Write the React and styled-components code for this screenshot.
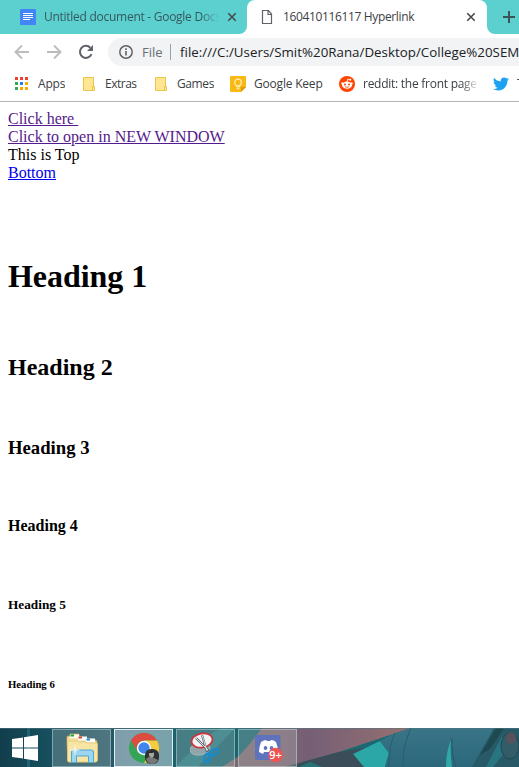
import React from "react";
import styled, { createGlobalStyle } from "styled-components";

const Global = createGlobalStyle`
  body { margin: 0; background: #fff; overflow: hidden; }
  * { box-sizing: border-box; }
`;

const Screen = styled.div`
  display: flex;
  flex-direction: column;
  width: 519px;
  height: 767px;
  overflow: hidden;
`;

const Text = styled.span`
  font-family: "Open Sans", "Noto Sans", sans-serif;
  font-size: ${(p) => p.$size || 12}px;
  letter-spacing: ${(p) => p.$track || 0}px;
  color: ${(p) => p.$color || "#3c4043"};
  line-height: 18px;
  white-space: pre;
  overflow: hidden;
  flex: none;
  width: ${(p) => (p.$width ? p.$width + "px" : "auto")};
  margin-left: ${(p) => p.$indent || 0}px;
  mask-image: ${(p) => (p.$fade ? `linear-gradient(to right, #000 calc(100% - ${p.$fade}px), transparent)` : "none")};
`;

const Icon = styled.svg`
  display: block;
  flex: none;
  width: ${(p) => p.$w || 16}px;
  height: ${(p) => p.$h || p.$w || 16}px;
`;

const TabStrip = styled.div`
  display: flex;
  height: 34px;
  flex: none;
  background: #fff;
`;

const InactiveTab = styled.div`
  display: flex;
  align-items: center;
  width: 247px;
  padding-left: 20px;
  background: #5ccfcf;
  border-bottom-right-radius: 8px;
`;

const ActiveTab = styled.div`
  display: flex;
  align-items: center;
  width: 240px;
  background: linear-gradient(#5ccfcf, #5ccfcf) 0 0 / 100% 8px no-repeat;
`;

const ActiveFace = styled.div`
  display: flex;
  align-items: center;
  width: 240px;
  height: 34px;
  padding-left: 12px;
  background: #fff;
  border-radius: 8px 8px 0 0;
`;

const NewTab = styled.div`
  display: flex;
  align-items: center;
  flex: 1;
  padding: 2px 0 0 15px;
  overflow: hidden;
  background: #5ccfcf;
  border-bottom-left-radius: 8px;
`;

const Toolbar = styled.div`
  display: flex;
  align-items: center;
  height: 36px;
  flex: none;
  padding-left: 14px;
  gap: 16px;
`;

const AddressBar = styled.div`
  display: flex;
  align-items: center;
  flex: 1;
  height: 28px;
  margin-left: -2px;
  padding-left: 10px;
  overflow: hidden;
  background: #f1f3f4;
  border-radius: 14px 0 0 14px;
`;

const Divider = styled.div`
  width: 1px;
  height: 16px;
  flex: none;
  margin: 0 9px 0 7px;
  background: #9aa0a6;
`;

const Bookmarks = styled.div`
  display: flex;
  align-items: center;
  height: 32px;
  flex: none;
  padding: 0 0 4px 14px;
  overflow: hidden;
  border-bottom: 1px solid #b6b4b6;
`;

const Bookmark = styled.div`
  display: flex;
  align-items: center;
  flex: none;
  gap: 8px;
  width: ${(p) => p.$width}px;
`;

const Page = styled.main`
  flex: 1;
  padding: 8px 8px 0;
  overflow: hidden;
  color: #000;
  font-family: "Liberation Serif", "Times New Roman", serif;
  font-size: 16px;
  line-height: normal;

  h1 { font-size: 32px; margin: 22.44px 0 20.44px; letter-spacing: -0.05px; }
  h2 { font-size: 24px; margin: 19.92px 0; }
  h3 { font-size: 18.72px; margin: 18.72px 0; }
  h4 { font-size: 16px; margin: 21.28px 0; }
  h5 { font-size: 13.28px; margin: 22.18px 0; }
  h6 { font-size: 10.72px; margin: 24.98px 0; }
`;

const Link = styled.a`
  color: ${(p) => (p.$visited ? "#551a8b" : "#0000ee")};
  text-decoration: underline;
  white-space: pre;
`;

const Taskbar = styled.footer`
  position: relative;
  display: flex;
  height: 39px;
  flex: none;
  overflow: hidden;
  background: #164a5a;
`;

const Wallpaper = styled.svg`
  position: absolute;
  inset: 0;
  width: 519px;
  height: 39px;
`;

const StartButton = styled.div`
  position: relative;
  display: flex;
  align-items: center;
  width: 52px;
  padding-left: 12px;
`;

const TaskButton = styled.div`
  position: relative;
  display: flex;
  align-items: center;
  justify-content: center;
  width: 59px;
  height: 38px;
  margin: 1px 3px 0 0;
  border: 1px solid ${(p) => (p.$active ? "rgba(255,255,255,.8)" : "rgba(215,235,235,.42)")};
  background: ${(p) => (p.$active ? "rgba(205,222,230,.52)" : "rgba(175,190,190,.3)")};
`;

function Close() {
  return (
    <Icon viewBox="0 0 16 16">
      <path d="M4.3 4.3l7.4 7.4M11.7 4.3l-7.4 7.4" stroke="#45494c" strokeWidth="1.6" />
    </Icon>
  );
}

function Folder() {
  return (
    <Icon viewBox="-1 0 16 16">
      <path d="M1.5 1.5h10v9h1v4h-11z" fill="#ffe693" stroke="#e9c64a" />
      <path d="M10.5 14v-3.5h2V14" fill="#ffe693" stroke="#e9c64a" />
    </Icon>
  );
}

function AppsGrid() {
  const colors = ["#ea4335", "#ea4335", "#ea4335", "#34a853", "#1a82f7", "#f9ab00", "#34a853", "#f9ab00", "#f9ab00"];
  return (
    <Icon viewBox="0 0 16 16">
      {colors.map((c, i) => (
        <rect key={i} x={1 + (i % 3) * 5} y={1 + Math.floor(i / 3) * 5} width="3" height="3" fill={c} />
      ))}
    </Icon>
  );
}

function WallpaperArt() {
  return (
    <Wallpaper viewBox="0 0 519 39" preserveAspectRatio="none">
      <defs>
        <linearGradient id="sea" x1="0" x2="1">
          <stop offset="0" stopColor="#123e4c" />
          <stop offset=".1" stopColor="#17505f" />
          <stop offset=".16" stopColor="#1b5060" />
          <stop offset=".25" stopColor="#2b5c6c" />
          <stop offset=".36" stopColor="#17646d" />
          <stop offset="1" stopColor="#206d78" />
        </linearGradient>
        <linearGradient id="skin" gradientUnits="userSpaceOnUse" x1="222" x2="411" y1="0" y2="0">
          <stop offset="0" stopColor="#7b6b70" />
          <stop offset=".3" stopColor="#81646f" />
          <stop offset=".45" stopColor="#755f76" />
          <stop offset="1" stopColor="#96706f" />
        </linearGradient>
        <linearGradient id="cloth" x1="0" y1="0" x2="0" y2="1">
          <stop offset="0" stopColor="#397487" />
          <stop offset="1" stopColor="#2c687c" />
        </linearGradient>
      </defs>
      <rect width="519" height="39" fill="url(#sea)" />
      <path d="M27 0h3v39h-3z" fill="#287f91" opacity=".5" />
      <path d="M175 39L207 8l14-8h14L198 39z" fill="#2c8c91" opacity=".55" />
      <path d="M222 39L239 28Q252 14 262 0H411L339 24 286 39z" fill="url(#skin)" />
      <path d="M284 39l55-15 45-7 12 22z" fill="#3b4d58" />
      <path d="M353 26l27-13 9 12-4 14h-21z" fill="#2ba7a8" />
      <path d="M299 39l11-5 12 5z" fill="#257478" />
      <path d="M411 0l-18 6-13 7 9 12-4 14h134V0z" fill="url(#cloth)" />
      <path d="M411 0q-9 19-8 39M395 5q-6 12-6 34" stroke="#285c70" fill="none" />
      <path d="M451 12q-5 12-5 27h6q-2-14-1-27z" fill="#2ea8a9" />
      <path d="M452 10q-1 16 4 29" stroke="#28566a" fill="none" />
      <path d="M494 0h25v39h-47z" fill="#285967" />
      <path d="M496 0h8l-14 21-10 6z" fill="#1c4a50" />
      <path d="M502 8l4 15-13 16h-7z" fill="#287481" />
      <ellipse cx="510" cy="18" rx="9" ry="13" fill="#315c68" stroke="#204752" />
      <ellipse cx="511" cy="10" rx="5" ry="6" fill="#694f58" opacity=".7" />
      <path d="M0 .5h519" stroke="#53777f" opacity=".55" />
    </Wallpaper>
  );
}

export default function App() {
  return (
    <Screen>
      <Global />
      <TabStrip>
        <InactiveTab>
          <Icon viewBox="0 0 16 16">
            <rect width="16" height="16" rx="1" fill="#4285f4" />
            <path d="M3 4.5h10M3 6.5h10M3 8.5h10M3 10.5h7" stroke="#fff" />
          </Icon>
          <Text $width={175} $indent={8} $fade={18} $track={-0.27} $color="#35595c">Untitled document - Google Docs</Text>
          <Icon $w={5} />
          <Close />
        </InactiveTab>
        <ActiveTab>
          <ActiveFace>
            <Icon viewBox="0 0 16 16">
              <path d="M3.5 1.500h6l3 3.500v9.500h-9zM9 1.500V5.500h4" fill="none" stroke="#5f6368" strokeWidth="1.2" />
            </Icon>
            <Icon $w={8} />
            <Text $width={180} $track={-0.36}>160410116117 Hyperlink</Text>
            <Close />
          </ActiveFace>
        </ActiveTab>
        <NewTab>
          <Icon viewBox="0 0 16 16">
            <path d="M7 1v12M1 7h12" stroke="#3c5357" strokeWidth="2" />
          </Icon>
        </NewTab>
      </TabStrip>
      <Toolbar>
        <Icon viewBox="0 0 16 16">
          <path d="M15 8H2M8 1.500L1.500 8 8 14.500" fill="none" stroke="#babcbe" strokeWidth="1.900" />
        </Icon>
        <Icon viewBox="0 0 16 16">
          <path d="M1 8h13M8 1.500L14.500 8 8 14.500" fill="none" stroke="#babcbe" strokeWidth="1.900" />
        </Icon>
        <Icon viewBox="0 0 16 16">
          <path d="M13.500 10.200A6 6 0 1 1 12.300 3.700" fill="none" stroke="#5f6368" strokeWidth="2" />
          <path d="M15 1v6H9z" fill="#5f6368" />
        </Icon>
        <AddressBar>
          <Icon viewBox="0 0 16 16">
            <circle cx="8" cy="8" r="6.200" fill="none" stroke="#5f6368" strokeWidth="1.500" />
            <path d="M8 7v4.500M8 4.300v1.600" stroke="#5f6368" strokeWidth="1.600" />
          </Icon>
          <Icon $w={8} />
          <Text $size={13} $color="#6b6f73" $width={21}>File</Text>
          <Divider />
          <Text $size={13.3} $color="#202124" $track={0.03}>file:///C:/Users/Smit%20Rana/Desktop/College%20SEM</Text>
        </AddressBar>
      </Toolbar>
      <Bookmarks>
        <Bookmark $width={67}><AppsGrid /><Text $track={-0.2}>Apps</Text></Bookmark>
        <Bookmark $width={72}><Folder /><Text $track={-0.5}>Extras</Text></Bookmark>
        <Bookmark $width={77}><Folder /><Text $track={-0.4}>Games</Text></Bookmark>
        <Bookmark $width={109}>
          <Icon viewBox="0 0 16 16">
            <path d="M1 0h14q1 0 1 1v10l-5 5H1q-1 0-1-1V1q0-1 1-1z" fill="#f9b914" />
            <path d="M16 11l-5 5v-5z" fill="#e29b08" />
            <circle cx="8" cy="6.500" r="3.300" fill="none" stroke="#fff1b8" strokeWidth="1.200" />
            <path d="M6.500 9v2h3V9M6.500 12.700h3" stroke="#fff1b8" fill="none" />
          </Icon>
          <Text $track={-0.2}>Google Keep</Text>
        </Bookmark>
        <Bookmark $width={154}>
          <Icon viewBox="0 0 16 16">
            <circle cx="8" cy="8" r="8" fill="#ff4500" />
            <ellipse cx="8" cy="9.200" rx="4.900" ry="3.600" fill="#fff" />
            <circle cx="3.500" cy="7.400" r="1.200" fill="#fff" />
            <circle cx="12.500" cy="7.400" r="1.200" fill="#fff" />
            <path d="M8 6l.8-3 2.500.6" stroke="#fff" fill="none" strokeWidth=".8" />
            <circle cx="11.300" cy="3.700" r="1" fill="#fff" />
            <circle cx="6" cy="8.500" r="1" fill="#ff4500" />
            <circle cx="10" cy="8.500" r="1" fill="#ff4500" />
            <path d="M5.900 10.700q2.100 1.300 4.200 0" stroke="#ff4500" fill="none" strokeWidth=".8" />
          </Icon>
          <Text $fade={18} $width={116} $track={-0.26}>reddit: the front page</Text>
        </Bookmark>
        <Bookmark $width={70}>
          <Icon viewBox="0 0 24 24">
            <path fill="#1da1f2" d="M23.950 4.570a10 10 0 0 1-2.820.77 4.960 4.960 0 0 0 2.160-2.720c-.950.550-2 .960-3.120 1.180a4.920 4.920 0 0 0-8.390 4.490C7.690 8.100 4.070 6.130 1.640 3.160a4.920 4.920 0 0 0 1.520 6.570 4.900 4.900 0 0 1-2.230-.610v.060a4.920 4.920 0 0 0 3.950 4.830 5 5 0 0 1-2.210.080 4.940 4.940 0 0 0 4.600 3.420A9.870 9.870 0 0 1 0 19.540a14 14 0 0 0 7.550 2.210c9.050 0 14-7.500 14-13.980l-.02-.640a9.900 9.900 0 0 0 2.420-2.560z" />
          </Icon>
          <Text>Twitter</Text>
        </Bookmark>
      </Bookmarks>
      <Page>
        <Link $visited>{"Click here "}</Link><br />
        <Link $visited>Click to open in NEW WINDOW</Link><br />
        This is Top<br />
        <Link>Bottom</Link><br /><br /><br /><br />
        <h1>Heading 1</h1><br />
        <h2>Heading 2</h2><br />
        <h3>Heading 3</h3><br />
        <h4>Heading 4</h4><br />
        <h5>Heading 5</h5><br />
        <h6>Heading 6</h6>
      </Page>
      <Taskbar>
        <WallpaperArt />
        <StartButton>
          <Icon $w={26} viewBox="0 0 26 26">
            <path d="M0 4l11-1.500v10H0zM12 2.300L26 0v12.500H12zM0 13.500h11v10L0 22zM12 13.500h14V26l-14-2.300z" fill="#fff" />
          </Icon>
        </StartButton>
        <TaskButton>
          <Icon $w={34} $h={32} viewBox="0 0 34 32">
            <path d="M2 11V5q0-1 1-1h2V2h9v2l6 2 10 2q2 0 2 2v18q0 2-2 2H3z" fill="#efd994" stroke="#c9a951" strokeWidth=".8" />
            <path d="M5 2.500h9v4H5z" fill="#fff" /><path d="M5.500 2.500h3.500v2H5.500z" fill="#16a72b" />
            <path d="M2.500 6h11l2 2v3h-13z" fill="#f5df9c" />
            <path d="M13 4.500h9v4h-9z" fill="#fff" /><path d="M13.500 4.500h3.500v2h-3.500z" fill="#d3402e" />
            <path d="M21 6.500h9v4h-9z" fill="#fff" /><path d="M21.500 6.500h3.500v2h-3.500z" fill="#2587d4" />
            <path d="M2.500 9h10l2 1h6l2 1h9q1 0 1 1v16q0 2-2 2h-26q-2 0-2-2z" fill="#f8e5a3" stroke="#dfc471" strokeWidth=".7" />
            <path d="M6.500 30.500V20q0-2 2-2h18q2 0 2 2v10.500h-5V24h-12v6.500z" fill="#9bd5ee" stroke="#4ea6d4" />
            <path d="M10 12l1 5 5 1-5 1-1 5-1-5-5-1 5-1z" fill="#fff" opacity=".75" />
          </Icon>
        </TaskButton>
        <TaskButton $active>
          <Icon $w={32} viewBox="0 0 32 32">
            <circle cx="16" cy="16" r="15" fill="#34a457" />
            <path d="M3 8.500A15 15 0 0 1 29 8.500H16a7.500 7.500 0 0 0-6.500 11z" fill="#df4b3f" />
            <path d="M29 8.500A15 15 0 0 1 16 31l6.500-11.500q3-7-6.500-11z" fill="#f7cc3c" />
            <circle cx="16" cy="16" r="7.200" fill="#fff" />
            <circle cx="16" cy="16" r="5.700" fill="#4285ec" />
            <rect x="17" y="17" width="14" height="15" rx="6" fill="#303133" />
            <path d="M18 27q3-3 6-2l6 3q-2 4-6 4-4 0-6-5z" fill="#777" />
            <path d="M21 20q2-2 5 0v4l-2 2-3-2z" fill="#a3a3a3" />
            <path d="M20 21q3-4 7-1l-3 1z" fill="#242526" />
          </Icon>
        </TaskButton>
        <TaskButton>
          <Icon $w={32} viewBox="0 0 32 32">
            <ellipse cx="10" cy="17" rx="10" ry="6" fill="#8fa5a8" stroke="#a6b5b8" transform="rotate(-8 10 17)" />
            <ellipse cx="12" cy="8.500" rx="10.500" ry="7" fill="#f4f3f6" stroke="#cf343b" strokeWidth="1.700" transform="rotate(-10 12 8.500)" />
            <path d="M6 6l13 13M12 3l5 17" stroke="#5f686c" strokeWidth="2.200" />
            <path d="M6 6l12 12M12 3l5 16" stroke="#e4eaec" strokeWidth=".9" />
            <ellipse cx="24" cy="20" rx="4.800" ry="2.600" fill="none" stroke="#168ccd" strokeWidth="2.300" transform="rotate(-28 24 20)" />
            <ellipse cx="17" cy="26" rx="2.500" ry="4.500" fill="none" stroke="#168ccd" strokeWidth="2.300" transform="rotate(15 17 26)" />
          </Icon>
        </TaskButton>
        <TaskButton>
          <Icon $w={30} viewBox="0 0 30 30">
            <rect x="2" y="2" width="25.500" height="25" rx="2.500" fill="#5f73bd" />
            <path d="M8 9q3-2 5-2l1 1h3l1-1q3 0 5 2 2 5 2 10l-4 2-1-2h-9l-1 2-4-2q0-5 2-10z" fill="#fff" />
            <ellipse cx="12.500" cy="15" rx="1.800" ry="2" fill="#5f73bd" />
            <ellipse cx="18.500" cy="15" rx="1.800" ry="2" fill="#5f73bd" />
            <circle cx="22.500" cy="22" r="7.300" fill="#ed5454" />
            <text x="22.500" y="26" fill="#fff" fontFamily="Open Sans, sans-serif" fontWeight="600" fontSize="11" textAnchor="middle">9+</text>
          </Icon>
        </TaskButton>
      </Taskbar>
    </Screen>
  );
}
